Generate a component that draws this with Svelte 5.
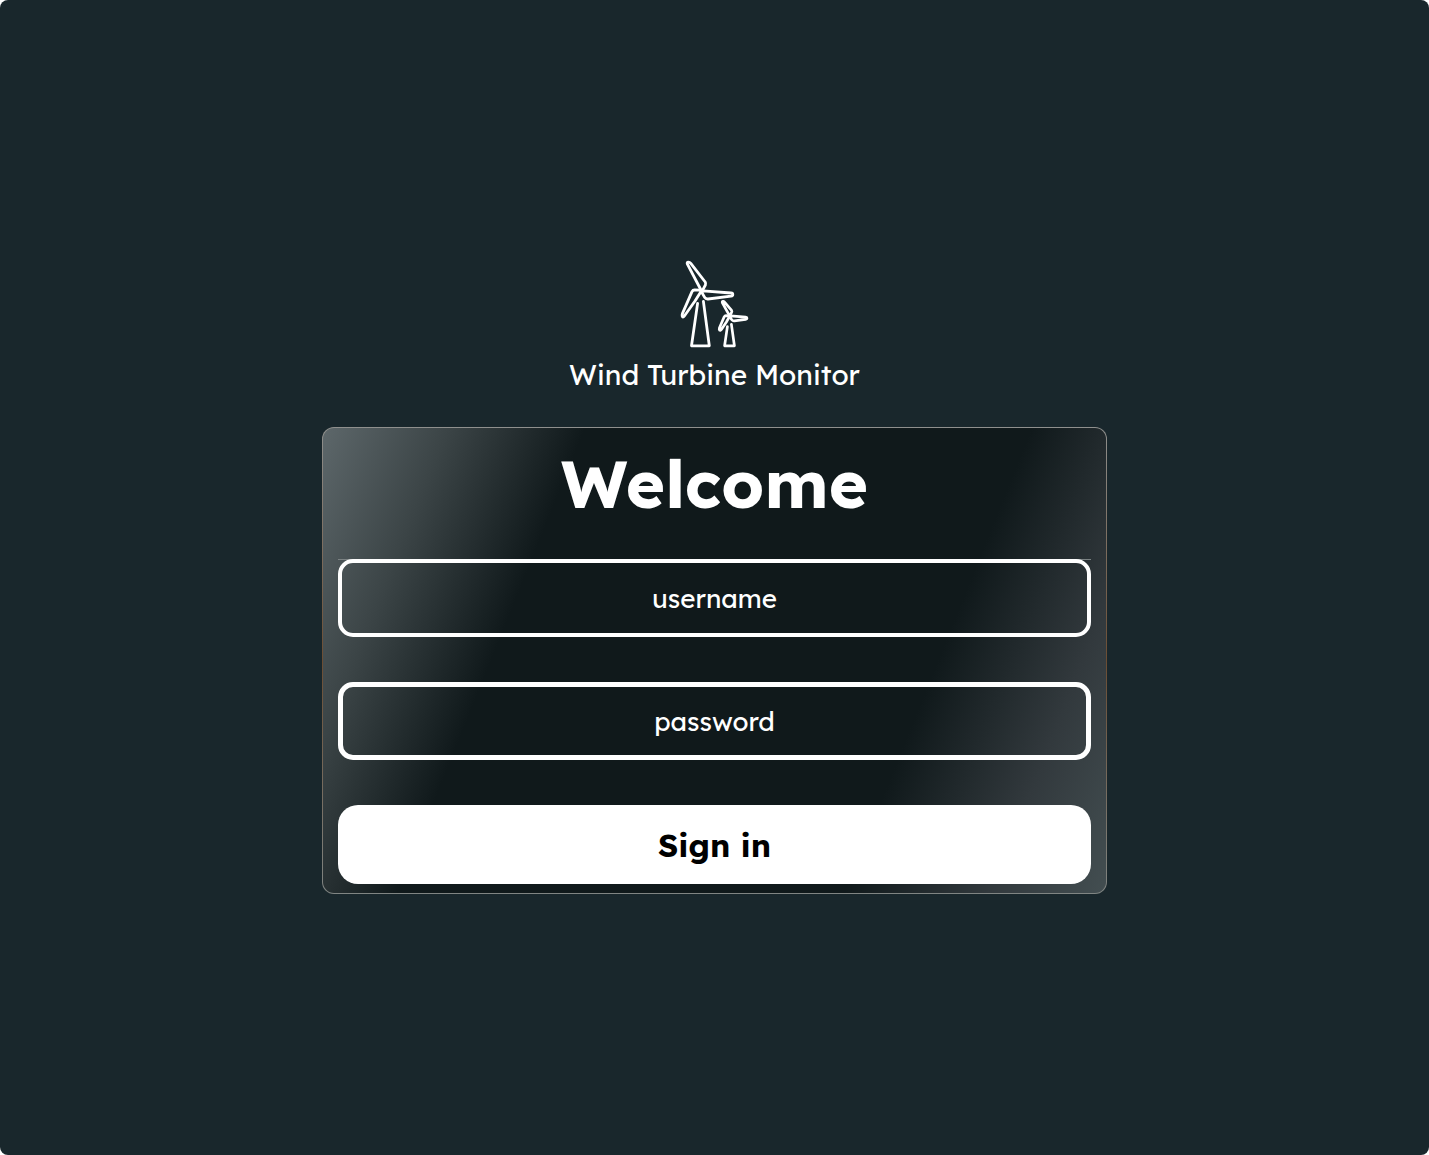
<script>
  let username = $state('');
  let password = $state('');
</script>

<main class="page">
  <header class="brand">
    <svg class="logo" viewBox="10 10 70 88" aria-hidden="true">
      <g class="large">
        <path d="M31 40 L17.4 14.2 Q16.6 12.2 18.4 12.2 Q19.8 12.2 20.8 13.4 L35.2 32 Q36 33.4 35.4 35 L32.4 40.6" />
        <path d="M33 40.8 L61 43 Q62.8 43.2 62.8 44.4 Q62.8 45.8 61 46.2 L38 49 Q35.8 49.2 34.8 47.6 L31.6 42" />
        <path d="M30 40.2 L24.6 40 Q22.8 40 22 41.6 L12.4 63.6 Q12 64.8 12.2 66 Q12.8 68 14.2 66.2 L25 51 L31 41.4" />
        <path d="M27.6 53.4 L21.5 95.8 H39.3 L33.4 51.4" />
      </g>
      <g class="small">
        <path d="M58.8 64.4 L52.4 52.8 Q51.8 51.2 53.2 51.4 Q54.2 51.6 55 52.6 L61.6 60.4 Q62.2 61.4 61.6 62.4 L60 65.4" />
        <path d="M60.4 65.8 L75.6 67.2 Q77 67.4 77 68.2 Q77 69 75.6 69.4 L64.4 70.8 Q62.8 71 62 70 L59.4 66.6" />
        <path d="M58.2 65.8 L56 65.6 Q54.8 65.6 54.2 66.8 L49.4 78 Q49 79.4 49.6 80.2 Q50.4 80.8 51.4 79.4 L56.4 72 L59 67.4" />
        <path d="M57.4 76.6 L54.6 95.8 H64.4 L61.4 74.4" />
      </g>
    </svg>
    <p class="name">Wind Turbine Monitor</p>
  </header>

  <form class="card" onsubmit={(e) => e.preventDefault()}>
    <h1>Welcome</h1>
    <div class="fields">
      <input class="username" type="text" placeholder="username" aria-label="username" bind:value={username} />
      <input class="password" type="password" placeholder="password" aria-label="password" bind:value={password} />
      <button type="submit">Sign in</button>
    </div>
  </form>
</main>

<style>
  :global(body) {
    margin: 0;
    background: #fff;
  }
  .page {
    box-sizing: border-box;
    min-height: 100vh;
    padding-bottom: 1px;
    display: flex;
    flex-direction: column;
    align-items: center;
    justify-content: center;
    gap: 32px;
    border-radius: 8px;
    background: #19272c;
    color: #fff;
    font-family: Lexend, Lato, sans-serif;
  }
  .brand {
    display: flex;
    flex-direction: column;
    align-items: center;
    gap: 7px;
  }
  .logo {
    width: 70px;
    height: 88px;
    fill: none;
    stroke: #fff;
    stroke-width: 2.8;
    stroke-linecap: round;
    stroke-linejoin: round;
  }
  .small {
    stroke-width: 2.7;
  }
  .name {
    margin: 0;
    font-size: 28px;
    line-height: 40px;
  }
  .card {
    box-sizing: border-box;
    width: 55%;
    padding: 0 15px 9px;
    border: 1px solid transparent;
    border-radius: 12px;
    background:
      linear-gradient(112deg, #5d676a 0%, #3b4446 13%, #10191b 27%, #10191b 73%, #32393d 88%, #434e51 100%) padding-box,
      linear-gradient(#8f908e, #6b4d33 50%, #808583) border-box;
  }
  h1 {
    margin: 0;
    padding: 5px 0 26px;
    text-align: center;
    font-size: 67px;
    font-weight: 700;
    line-height: 100px;
  }
  .fields {
    display: flex;
    flex-direction: column;
    gap: 45px;
    border-top: 1px solid #7b8283;
  }
  input,
  button {
    box-sizing: border-box;
    width: 100%;
    height: 78px;
    margin: 0;
    font-family: inherit;
    text-align: center;
  }
  input {
    border: 4px solid #fff;
    border-radius: 15px;
    background: transparent;
    color: #fff;
    font-size: 26px;
    outline: none;
  }
  input::placeholder {
    color: #fff;
    opacity: 1;
  }
  .username {
    margin-top: -1px;
  }
  .password {
    border-width: 5px;
  }
  button {
    height: 79px;
    border: 0;
    border-radius: 20px;
    background: #fff;
    color: #000;
    font-size: 32px;
    font-weight: 700;
    cursor: pointer;
  }
</style>
